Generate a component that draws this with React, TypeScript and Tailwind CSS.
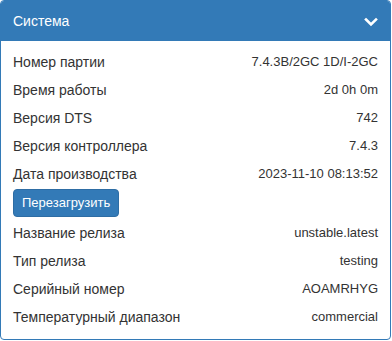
import React from "react"

interface Row {
    label: string,
    value: string
}

const topRows: Row[] = [
    { label: 'Номер партии', value: '7.4.3B/2GC 1D/I-2GC' },
    { label: 'Время работы', value: '2d 0h 0m' },
    { label: 'Версия DTS', value: '742' },
    { label: 'Версия контроллера', value: '7.4.3' },
    { label: 'Дата производства', value: '2023-11-10 08:13:52' },
]

const bottomRows: Row[] = [
    { label: 'Название релиза', value: 'unstable.latest' },
    { label: 'Тип релиза', value: 'testing' },
    { label: 'Серийный номер', value: 'AOAMRHYG' },
    { label: 'Температурный диапазон', value: 'commercial' },
]

const InfoRow = ({ label, value }: Row) => (
    <div className="flex h-[28px] items-center justify-between">
        <span>{label}</span>
        <span className="text-[13px]">{value}</span>
    </div>
)

const App = () => {
    return (
        <div className="w-[391px] h-[340px] bg-white" style={{ fontFamily: '"Liberation Sans", Arial, sans-serif' }}>
            <div className="h-full border border-[#337ab7] rounded-[4px] overflow-hidden text-[14px] text-[#333]">
                <div className="flex h-[40px] items-center justify-between bg-[#337ab7] pl-[12px] pr-[12px] text-white">
                    <span>Система</span>
                    <svg width="14" height="10" viewBox="0 0 14 10" className="mt-[1px]">
                        <polyline points="2,2.5 7,7.5 12,2.5" fill="none" stroke="#fff" strokeWidth="2.6" strokeLinecap="square" />
                    </svg>
                </div>
                <div className="px-[12px] pt-[7px]">
                    {topRows.map(r => <InfoRow key={r.label} {...r} />)}
                    <button className="mt-[1px] mb-[2px] h-[28px] rounded-[4px] border border-[#2e6da4] bg-[#337ab7] px-[8px] text-[13px] text-white">
                        Перезагрузить
                    </button>
                    {bottomRows.map(r => <InfoRow key={r.label} {...r} />)}
                </div>
            </div>
        </div>
    )
}

export default App
